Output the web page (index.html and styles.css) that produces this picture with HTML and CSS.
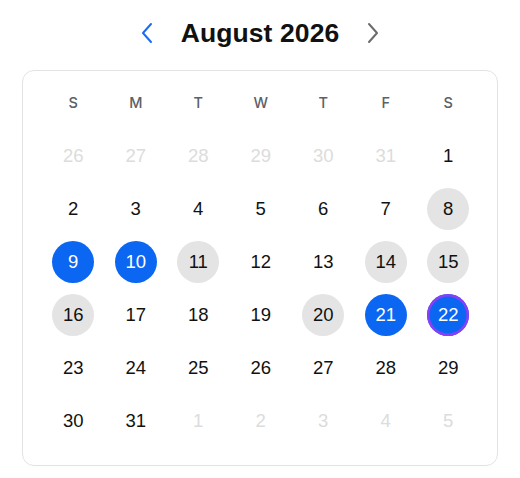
FILE: index.html
```html
<!DOCTYPE html>
<html>
<head>
<meta charset="utf-8">
<link rel="stylesheet" href="styles.css">
</head>
<body>
<div class="page">
  <div class="header">
    <button class="nav prev" aria-label="Previous month">
      <svg width="14" height="22" viewBox="0 0 14 22"><path d="M11 2 L3 11 L11 20" fill="none" stroke="#1a6cf0" stroke-width="2" stroke-linecap="round" stroke-linejoin="round"/></svg>
    </button>
    <h1 class="title">August 2026</h1>
    <button class="nav next" aria-label="Next month">
      <svg width="14" height="22" viewBox="0 0 14 22"><path d="M3 2 L11 11 L3 20" fill="none" stroke="#6b6b6b" stroke-width="2" stroke-linecap="round" stroke-linejoin="round"/></svg>
    </button>
  </div>
  <div class="card">
    <div class="weekdays">
      <span>S</span><span>M</span><span>T</span><span>W</span><span>T</span><span>F</span><span>S</span>
    </div>
    <div class="grid">
      <span class="day muted">26</span><span class="day muted">27</span><span class="day muted">28</span><span class="day muted">29</span><span class="day muted">30</span><span class="day muted">31</span><span class="day">1</span>
      <span class="day">2</span><span class="day">3</span><span class="day">4</span><span class="day">5</span><span class="day">6</span><span class="day">7</span><span class="day"><i class="dot busy">8</i></span>
      <span class="day"><i class="dot sel">9</i></span><span class="day"><i class="dot sel">10</i></span><span class="day"><i class="dot busy">11</i></span><span class="day">12</span><span class="day">13</span><span class="day"><i class="dot busy">14</i></span><span class="day"><i class="dot busy">15</i></span>
      <span class="day"><i class="dot busy">16</i></span><span class="day">17</span><span class="day">18</span><span class="day">19</span><span class="day"><i class="dot busy">20</i></span><span class="day"><i class="dot sel">21</i></span><span class="day"><i class="dot sel focus">22</i></span>
      <span class="day">23</span><span class="day">24</span><span class="day">25</span><span class="day">26</span><span class="day">27</span><span class="day">28</span><span class="day">29</span>
      <span class="day">30</span><span class="day">31</span><span class="day muted">1</span><span class="day muted">2</span><span class="day muted">3</span><span class="day muted">4</span><span class="day muted">5</span>
    </div>
  </div>
</div>
</body>
</html>
```

FILE: styles.css
```css
* { box-sizing: border-box; }
html, body { margin: 0; padding: 0; background: #fff; }
body { font-family: "Liberation Sans", Arial, sans-serif; color: #111; }
.page { width: 520px; padding: 0 22px; }
.header {
  height: 70px;
  display: flex;
  align-items: center;
  justify-content: center;
  gap: 27px;
  padding-bottom: 4px;
}
.nav {
  background: none; border: 0; padding: 0; margin: 0;
  width: 14px; height: 22px; display: flex; align-items: center; justify-content: center;
}
.title { margin: 0; font-size: 26.5px; font-weight: 700; color: #111; letter-spacing: 0.1px; }
.card {
  width: 476px;
  height: 396px;
  border: 1.5px solid #e3e3e3;
  border-radius: 12px;
  padding: 12px 18px 19px 19px;
}
.weekdays {
  display: grid;
  grid-template-columns: repeat(7, 62.5px);
  height: 38px;
  align-items: center;
  justify-items: center;
  font-family: Inter, "Liberation Sans", sans-serif;
  font-size: 14.5px;
  font-weight: 500;
  color: #5b6166;
}
.grid {
  margin-top: 8px;
  display: grid;
  grid-template-columns: repeat(7, 62.5px);
  grid-auto-rows: 53px;
  align-items: center;
  justify-items: center;
}
.day { font-size: 18.5px; color: #111; display: flex; align-items: center; justify-content: center; width: 42px; height: 42px; }
.day.muted { color: #dcdcdc; }
.dot {
  font-style: normal;
  width: 42px; height: 42px; border-radius: 50%;
  display: flex; align-items: center; justify-content: center;
}
.dot.busy { background: #e4e4e4; color: #111; }
.dot.sel { background: #0b66f2; color: #fff; }
.dot.focus { box-shadow: inset 0 0 0 2.5px #8a3ef6; }
```
